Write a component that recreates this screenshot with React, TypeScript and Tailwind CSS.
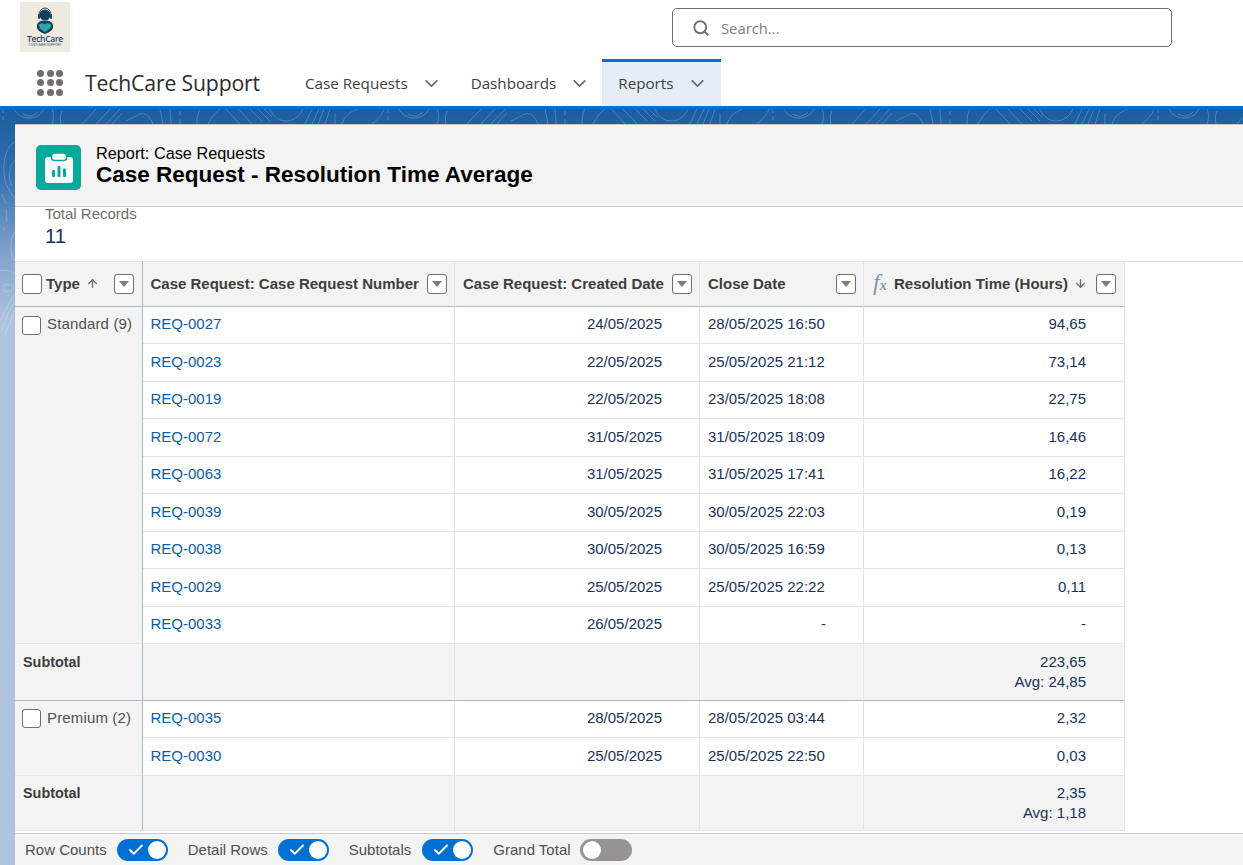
import React from "react";
import { Search, ChevronDown, ArrowUp, ArrowDown, Check } from "lucide-react";

const sans = "font-['Liberation_Sans',Arial,sans-serif]";

const group1 = [
  ["REQ-0027", "24/05/2025", "28/05/2025 16:50", "94,65"],
  ["REQ-0023", "22/05/2025", "25/05/2025 21:12", "73,14"],
  ["REQ-0019", "22/05/2025", "23/05/2025 18:08", "22,75"],
  ["REQ-0072", "31/05/2025", "31/05/2025 18:09", "16,46"],
  ["REQ-0063", "31/05/2025", "31/05/2025 17:41", "16,22"],
  ["REQ-0039", "30/05/2025", "30/05/2025 22:03", "0,19"],
  ["REQ-0038", "30/05/2025", "30/05/2025 16:59", "0,13"],
  ["REQ-0029", "25/05/2025", "25/05/2025 22:22", "0,11"],
  ["REQ-0033", "26/05/2025", "-", "-"],
];
const group2 = [
  ["REQ-0035", "28/05/2025", "28/05/2025 03:44", "2,32"],
  ["REQ-0030", "25/05/2025", "25/05/2025 22:50", "0,03"],
];

function Logo() {
  return (
    <div className="w-[50px] h-[50px] bg-[#efeadf] flex flex-col items-center pt-[4px] shrink-0">
      <svg width="20" height="28" viewBox="0 0 20 28">
        <path d="M4 9 A6 7 0 0 1 16 9" fill="none" stroke="#1d4a68" strokeWidth="1" />
        <circle cx="10" cy="9" r="5.5" fill="#123f5c" />
        <rect x="3" y="8" width="2" height="5" rx="1" fill="#1d4a68" />
        <rect x="15" y="8" width="2" height="5" rx="1" fill="#1d4a68" />
        <path d="M2 22 C1 16 6 14 10 15 C14 14 19 16 18 22 C17 25 13 27 10 28 C7 27 3 25 2 22Z" fill="#14405c" />
        <path d="M10 26 C7 24 4 22 4 19.5 C4 17 8 16.5 10 18.5 C12 16.5 16 17 16 19.5 C16 22 13 24 10 26Z" fill="#2fa6ad" />
      </svg>
      <div className="font-['Open_Sans',sans-serif] font-semibold text-[8.5px] leading-[9px] text-[#1d4a68] tracking-[-0.3px]">TechCare</div>
      <div className={`${sans} text-[3px] leading-[5px] text-[#1d4a68]`}>CUSTOMER SUPPORT</div>
    </div>
  );
}

function AppLauncher() {
  return (
    <div className="grid grid-cols-3 gap-[2.5px] w-[26px]">
      {Array.from({ length: 9 }).map((_, i) => (
        <div key={i} className="w-[7px] h-[7px] rounded-full bg-[#706e6b]" />
      ))}
    </div>
  );
}

function NavTab({ label, active, pr }: { label: string; active?: boolean; pr: string }) {
  return (
    <div
      className={
        active
          ? `h-[47px] flex items-center pl-[16px] gap-[14px] bg-[#e5eef8] border-t-[3px] border-[#0070d2] pb-[1px] ${pr}`
          : `h-[47px] flex items-center pl-[16px] gap-[13px] pt-[2px] ${pr}`
      }
    >
      <span className="text-[15.2px] text-[#3e3e3c]">{label}</span>
      <ChevronDown size={21} strokeWidth={2} className="text-[#6b6b6b]" />
    </div>
  );
}

function FilterBtn() {
  return (
    <div className="w-[20px] h-[20px] shrink-0 rounded-[3px] border border-[#706e6b] bg-white flex items-center justify-center">
      <svg width="10" height="6" viewBox="0 0 10 6">
        <path d="M0 0H10L5 6Z" fill="#807e7b" />
      </svg>
    </div>
  );
}

function CheckBox({ small }: { small?: boolean }) {
  return (
    <div
      className={
        small
          ? "w-[19px] h-[19px] shrink-0 rounded-[3px] border border-[#706e6b] bg-white"
          : "w-[20px] h-[20px] shrink-0 rounded-[3px] border border-[#706e6b] bg-white"
      }
    />
  );
}

function Toggle({ on }: { on: boolean }) {
  return (
    <div
      className={
        on
          ? "w-[51px] h-[22px] rounded-full bg-[#0070d2] flex items-center justify-between pl-[10px] pr-[2px]"
          : "w-[52px] h-[22px] rounded-full bg-[#969492] flex items-center pl-[3px]"
      }
    >
      {on && <Check size={18} strokeWidth={2.5} className="text-white" />}
      <div className="w-[18px] h-[18px] rounded-full bg-white" />
    </div>
  );
}

const cellB = "border-b border-[#dfe4ee]";
const cellR = "border-r border-r-[#dfe4ee]";

function HeaderCell({ children, className }: { children: React.ReactNode; className?: string }) {
  return (
    <div className={`bg-[#f3f3f3] border-b border-[#a9b8cb] border-t border-t-[#e4e8f1] flex items-center text-[15px] font-bold text-[#3e3e3c] ${className ?? ""}`}>
      {children}
    </div>
  );
}

function Rows({ rows }: { rows: string[][] }) {
  return (
    <>
      {rows.map((r) => (
        <React.Fragment key={r[0]}>
          <div className={`${cellB} ${cellR} flex items-center pl-[7.5px] pb-[1px] text-[#0b5cab]`}>{r[0]}</div>
          <div className={`${cellB} ${cellR} flex items-center justify-end pr-[37px] pb-[1px]`}>{r[1]}</div>
          <div className={`${cellB} ${cellR} flex items-center pl-[8px] pb-[1px] ${r[2] === "-" ? "justify-end pr-[37px]" : ""}`}>{r[2]}</div>
          <div className={`${cellB} ${cellR} flex items-center justify-end pr-[38px] pb-[1px]`}>{r[3]}</div>
        </React.Fragment>
      ))}
    </>
  );
}

function Subtotal({ total, avg, strong }: { total: string; avg: string; strong?: boolean }) {
  const b = strong ? "border-b border-[#a9b8cb]" : cellB;
  return (
    <>
      <div className={`bg-[#f3f3f3] ${b} border-r border-r-[#a9b8cb] pl-[8px] pt-[7.5px] font-bold text-[#3e3e3c] text-[14.4px]`}>Subtotal</div>
      <div className={`bg-[#f3f3f3] ${b} ${cellR}`} />
      <div className={`bg-[#f3f3f3] ${b} ${cellR}`} />
      <div className={`bg-[#f3f3f3] ${b} ${cellR}`} />
      <div className={`bg-[#f3f3f3] ${b} ${cellR} pr-[38px] pt-[7.5px] text-right leading-[20px]`}>
        <div>{total}</div>
        <div>{avg}</div>
      </div>
    </>
  );
}

const tile = [
  "M3 0 L3 4 M3 7 L3 11",
  "M14 0 C20 12 38 12 44 0",
  "M23 5 C28 8 33 8 38 3",
  "M52 0 C54 5 54 10 52 15",
  "M62 2 C60 6 60 10 61 15",
  "M82 15 L96 0",
  "M96 15 L110 0",
  "M106 15 L120 0",
  "M112 15 L122 4",
  "M126 12 L140 5 C146 3 150 8 153 15",
  "M160 0 L163 15",
  "M170 0 L171 15",
  "M180 2 L180 6 M180 10 L180 15",
  "M197 15 C197 8 198 4 200 0",
  "M208 15 C212 8 216 3 220 0",
  "M226 0 L240 15",
  "M238 0 L252 15",
  "M250 0 L262 12",
  "M258 0 L270 12",
  "M264 0 L272 8",
  "M270 0 C276 16 296 16 303 0",
  "M305 15 L312 0",
  "M312 15 L319 0",
  "M318 15 L324 0",
  "M325 15 L330 0",
  "M335 15 L335 5",
  "M342 15 C345 6 350 3 358 0",
  "M372 15 C378 10 382 6 384 0",
];

const strip = [
  "M15 33 C5 37 2 56 5 71 C7 79 12 86 15 89",
  "M15 51 C9 56 8 69 12 77",
  "M2 85 L6 95 M6 100 L7 112 M5 118 L3 122",
  "M15 123 C10 128 9 145 15 152",
  "M0 162 C6 160 12 162 15 165",
  "M2 179 C4 174 12 174 14 179 C12 184 4 184 2 179Z",
  "M15 185 C8 195 4 205 0 212",
  "M15 192 C10 200 5 212 1 222",
  "M15 200 C12 208 8 218 4 228",
];

export default function App() {
  return (
    <div className="w-[1243px] h-[865px] overflow-hidden flex flex-col bg-white font-['Open_Sans',sans-serif]">
      <div className="h-[59px] flex items-start shrink-0">
        <div className="ml-[20px] mt-[2px]">
          <Logo />
        </div>
        <div className="ml-[602px] mt-[8px] w-[500px] h-[39px] rounded-[5px] border border-[#706e6b] flex items-center pl-[19px] gap-[11px]">
          <Search size={18} strokeWidth={2.5} className="text-[#706e6b]" />
          <span className="text-[14.8px] text-[#7f7d7a] pt-[1px]">Search...</span>
        </div>
      </div>

      <div className="h-[47px] flex items-center shrink-0 pl-[37px]">
        <AppLauncher />
        <span className="ml-[22px] mr-[29px] pt-[1px] text-[21.2px] text-[#2b2b2b] tracking-[-0.15px] w-[175px] whitespace-nowrap">TechCare Support</span>
        <NavTab label="Case Requests" pr="pr-[13px]" />
        <NavTab label="Dashboards" pr="pr-[12px]" />
        <NavTab label="Reports" active pr="pr-[13px]" />
      </div>
      <div className="h-[3px] bg-[#0070d2] shrink-0" />

      <div className={`relative flex-1 min-h-0 pl-[15px] pt-[15px] bg-[linear-gradient(to_bottom,#1b5e9f_0px,#2e6cac_60px,#7da0cb_140px,#b0c4e0_215px)] ${sans}`}>
        <svg className="absolute left-0 top-0" width="1243" height="260" viewBox="0 0 1243 260" fill="none" stroke="#ffffff" strokeOpacity="0.22" strokeWidth="1">
          <defs>
            <pattern id="contour" x="0" y="0" width="385" height="15" patternUnits="userSpaceOnUse">
              {tile.map((d) => (
                <path key={d} d={d} />
              ))}
            </pattern>
          </defs>
          <rect x="0" y="0" width="1243" height="15" fill="url(#contour)" stroke="none" />
          {strip.map((d) => (
            <path key={d} d={d} />
          ))}
        </svg>

        <div className="relative h-full flex flex-col bg-white text-[15px] text-[#16325c]">
          <div className="h-[83px] shrink-0 bg-[#f3f3f3] border-t border-[#c9c9c9] border-b flex items-start pl-[21px] gap-[15px] pt-[20px]">
            <div className="w-[45px] h-[45px] rounded-[5px] bg-[#06a99a] flex items-center justify-center">
              <svg width="28" height="30" viewBox="0 0 28 30">
                <path d="M3 4h22a3 3 0 0 1 3 3v20a3 3 0 0 1-3 3H3a3 3 0 0 1-3-3V7a3 3 0 0 1 3-3Z" fill="#fff" />
                <rect x="6.5" y="0" width="15" height="7.5" rx="3" fill="#fff" stroke="#06a99a" strokeWidth="1.5" />
                <rect x="7" y="17" width="3" height="7" rx="1" fill="#06a99a" />
                <rect x="12.5" y="13" width="3" height="11" rx="1" fill="#06a99a" />
                <rect x="18" y="15.5" width="3" height="8.5" rx="1" fill="#06a99a" />
              </svg>
            </div>
            <div className="text-black -mt-[1px]">
              <div className="text-[16.3px] leading-[18px]">Report: Case Requests</div>
              <div className="text-[22.5px] leading-[25px] font-bold">Case Request - Resolution Time Average</div>
            </div>
          </div>

          <div className="h-[55px] shrink-0 pl-[30px] border-b border-[#dddbda]">
            <div className="text-[15px] leading-[16px] -mt-[1px] text-[#706e6b]">Total Records</div>
            <div className="text-[20px] leading-[24px] mt-[2px] text-[#16325c]">11</div>
          </div>

          <div className="flex-1 min-h-0 -mt-[1px]">
            <div className="w-[1110px] grid grid-cols-[128px_312px_245px_164px_261px] grid-rows-[45.5px_repeat(9,37.5px)_56.5px_repeat(2,37.5px)_55.5px]">
              <HeaderCell className="pl-[7px] pr-[8px] border-r border-r-[#a9b8cb]">
                <CheckBox />
                <span className="ml-[4px]">Type</span>
                <ArrowUp size={13} strokeWidth={2.5} className="ml-[6px] text-[#706e6b]" />
                <span className="flex-1" />
                <FilterBtn />
              </HeaderCell>
              <HeaderCell className="pl-[7.5px] pr-[7px] justify-between border-r border-r-[#dfe4ee]">
                <span>Case Request: Case Request Number</span>
                <FilterBtn />
              </HeaderCell>
              <HeaderCell className="pl-[8px] pr-[7px] justify-between border-r border-r-[#dfe4ee]">
                <span>Case Request: Created Date</span>
                <FilterBtn />
              </HeaderCell>
              <HeaderCell className="pl-[8px] pr-[7px] justify-between border-r border-r-[#dfe4ee]">
                <span>Close Date</span>
                <FilterBtn />
              </HeaderCell>
              <HeaderCell className="pl-[9px] pr-[8px] border-r border-r-[#dfe4ee]">
                <span className="font-['Liberation_Serif',serif] italic font-normal text-[#7b96b5] text-[24px] leading-[24px] w-[21px] whitespace-nowrap">
                  f<span className="font-bold text-[14px]">x</span>
                </span>
                <span>Resolution Time (Hours)</span>
                <ArrowDown size={13} strokeWidth={2.5} className="ml-[6px] text-[#706e6b]" />
                <span className="flex-1" />
                <FilterBtn />
              </HeaderCell>

              <div className="row-span-9 col-start-1 bg-[#f3f3f3] border-b border-[#dfe4ee] border-r border-r-[#a9b8cb] pl-[7px] pt-[9px] flex items-start gap-[6px] text-[#514f4d]">
                <CheckBox small />
                <span className="leading-[18px] -mt-[1px] tracking-[0.15px] whitespace-nowrap">Standard (9)</span>
              </div>
              <div className="col-start-2 col-span-4 row-span-9 grid grid-cols-subgrid grid-rows-subgrid">
                <Rows rows={group1} />
              </div>
              <Subtotal total="223,65" avg="Avg: 24,85" strong />

              <div className="row-span-2 col-start-1 bg-[#f3f3f3] border-b border-[#dfe4ee] border-r border-r-[#a9b8cb] pl-[7px] pt-[8px] flex items-start gap-[6px] text-[#514f4d]">
                <CheckBox small />
                <span className="leading-[18px] tracking-[0.15px] whitespace-nowrap">Premium (2)</span>
              </div>
              <div className="col-start-2 col-span-4 row-span-2 grid grid-cols-subgrid grid-rows-subgrid">
                <Rows rows={group2} />
              </div>
              <Subtotal total="2,35" avg="Avg: 1,18" />
            </div>
          </div>

          <div className="h-[32px] shrink-0 bg-[#f3f3f3] border-t border-[#c9c9c9] flex items-center pl-[10px] text-[15px] text-[#514f4d]">
            <span className="mr-[10px] pt-[1px]">Row Counts</span>
            <Toggle on />
            <span className="ml-[20px] mr-[10px] pt-[1px]">Detail Rows</span>
            <Toggle on />
            <span className="ml-[20px] mr-[11px] pt-[1px]">Subtotals</span>
            <Toggle on />
            <span className="ml-[20px] mr-[9px] pt-[1px]">Grand Total</span>
            <Toggle on={false} />
          </div>
        </div>
      </div>
    </div>
  );
}
